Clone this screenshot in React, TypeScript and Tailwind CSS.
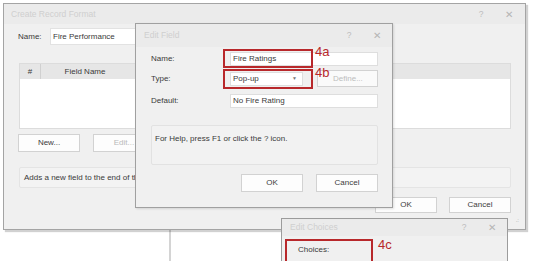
const font = { fontFamily: '"Liberation Sans", Arial, sans-serif' };

function TitleBar({ title, className = "" }: { title: string; className?: string }) {
  return (
    <div className={`flex items-center bg-[#ebebeb] text-[8.5px] ${className}`}>
      <span className="flex-1 text-[#cfcfcf]">{title}</span>
      <span className="w-[28px] text-center text-[#bdbdbd]">?</span>
      <span className="w-[28px] text-center text-[10px] text-[#b5b5b5]">✕</span>
    </div>
  );
}

function Btn({ label, disabled = false, className = "" }: { label: string; disabled?: boolean; className?: string }) {
  return (
    <div
      className={`flex w-[62px] items-center justify-center border border-[#d2d2d2] bg-[#fdfdfd] text-[8px] ${
        disabled ? "text-[#b9b9b9]" : "text-[#3c3c3c]"
      } ${className}`}
    >
      {label}
    </div>
  );
}

export default function App() {
  return (
    <div className="relative h-[261px] w-[533px] overflow-hidden bg-white text-[8px] text-[#3a3a3a]" style={font}>
      {/* background fragments */}
      <div className="absolute left-[169px] top-[230px] h-[31px] w-[2px] bg-[#d4d4d4]" />
      <div className="absolute left-[268px] top-[222px] h-[1px] w-[14px] bg-[#9a9a9a]" />

      {/* Create Record Format */}
      <div className="absolute left-[3px] top-[3px] flex h-[227px] w-[523px] flex-col border border-[#a4a4a4] bg-[#f0f0f0] shadow-[2px_2px_1px_rgba(0,0,0,0.18)]">
        <TitleBar title="Create Record Format" className="h-[20px] pl-[7px] pr-[2px]" />
        <div className="flex flex-1 flex-col px-[14px]">
          <div className="mt-[4px] flex h-[17px] items-center">
            <span className="w-[32px]">Name:</span>
            <div className="flex h-full w-[210px] items-center border border-[#e2e2e2] bg-white pl-[2px]">Fire Performance</div>
          </div>
          <div className="ml-[1px] mt-[18px] flex h-[66px] w-[492px] flex-col border border-[#dcdcdc] bg-white">
            <div className="flex h-[15px] items-center bg-[#e6e6e6] text-[8px]">
              <span className="flex h-full w-[21px] items-center justify-center border-r border-[#d0d0d0]">#</span>
              <span className="w-[88px] text-center">Field Name</span>
            </div>
          </div>
          <div className="mt-[5px] flex h-[18px] gap-[13px]">
            <Btn label="New..." />
            <Btn label="Edit..." disabled />
          </div>
          <div className="ml-[1px] mt-[15px] flex h-[21px] w-[492px] items-center rounded-[2px] border border-[#e4e4e4] bg-[#f3f3f3] pl-[4px]">
            Adds a new field to the end of the list.
          </div>
          <div className="mt-[9px] flex h-[16px] justify-end gap-[12px]">
            <Btn label="OK" />
            <Btn label="Cancel" />
          </div>
        </div>
        <div className="absolute bottom-[6px] right-[6px] text-[6px] leading-none text-[#a0a0a0]">.:</div>
      </div>

      {/* Edit Field */}
      <div className="absolute left-[135px] top-[23px] flex h-[185px] w-[258px] flex-col border border-[#a0a0a0] bg-[#f0f0f0] shadow-[1px_1px_2px_rgba(0,0,0,0.12)]">
        <TitleBar title="Edit Field" className="h-[23px] pl-[8px] pr-[1px]" />
        <div className="flex flex-col px-[14px] pl-[15px]">
          <div className="mt-[5px] flex h-[14px] items-center">
            <span className="w-[79px]">Name:</span>
            <div className="flex h-full flex-1 items-center border border-[#dedede] bg-white pl-[2px]">Fire Ratings</div>
          </div>
          <div className="mt-[4px] flex h-[17px] items-center">
            <span className="w-[79px]">Type:</span>
            <div className="flex h-[14px] w-[73px] items-center justify-between border border-[#dedede] bg-white pl-[2px] pr-[5px]">
              <span>Pop-up</span>
              <span className="text-[5px] text-[#777]">▼</span>
            </div>
            <div className="ml-[14px] flex h-full flex-1 items-center border border-[#d2d2d2] bg-[#fafafa] pl-[15px] text-[#bdbdbd]">
              Define...
            </div>
          </div>
          <div className="mt-[7px] flex h-[14px] items-center">
            <span className="w-[79px]">Default:</span>
            <div className="flex h-full flex-1 items-center border border-[#dedede] bg-white pl-[2px]">No Fire Rating</div>
          </div>
          <div className="mt-[17px] h-[40px] rounded-[2px] border border-[#e2e2e2] bg-[#f2f2f2] pl-[3px] pt-[7px]">
            For Help, press F1 or click the ? icon.
          </div>
          <div className="mt-[9px] flex h-[18px] justify-end gap-[13px]">
            <Btn label="OK" />
            <Btn label="Cancel" />
          </div>
        </div>
      </div>

      {/* annotations 4a / 4b */}
      <div className="absolute left-[223px] top-[49px] h-[19px] w-[90px] border-2 border-[#b8282b]" />
      <div className="absolute left-[223px] top-[69px] h-[20px] w-[90px] border-2 border-[#b8282b]" />
      <div className="absolute left-[315px] top-[45px] text-[13px] leading-none text-[#b8282b]">4a</div>
      <div className="absolute left-[315px] top-[66px] text-[13px] leading-none text-[#b8282b]">4b</div>

      {/* Edit Choices */}
      <div className="absolute left-[281px] top-[218px] flex h-[60px] w-[227px] flex-col border border-[#9c9c9c] bg-[#f0f0f0]">
        <TitleBar title="Edit Choices" className="h-[24px] pl-[8px] pr-[1px]" />
        <div className="relative flex h-full">
          <div className="ml-[3px] mt-[3px] h-[30px] w-[88px] border-2 border-[#b8282b] pl-[11px] pt-[3px]">Choices:</div>
          <div className="ml-[5px] mt-[2px] text-[13px] leading-none text-[#b8282b]">4c</div>
        </div>
      </div>
    </div>
  );
}
